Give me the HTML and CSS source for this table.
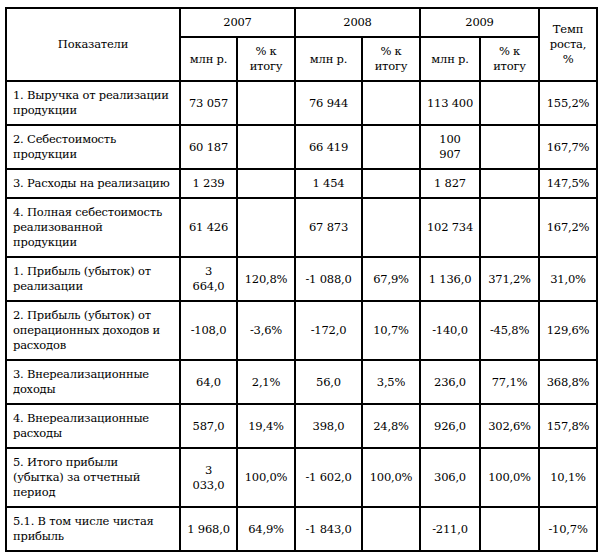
FILE: index.html
```html
<!DOCTYPE html>
<html lang="ru">
<head>
<meta charset="utf-8">
<title>Показатели</title>
<link rel="stylesheet" href="styles.css">
</head>
<body>
<div class="page">
<table class="report">
  <colgroup>
    <col class="c-name">
    <col class="c-val">
    <col class="c-pct">
    <col class="c-val8">
    <col class="c-pct">
    <col class="c-val9">
    <col class="c-pct9">
    <col class="c-rate">
  </colgroup>
  <thead>
    <tr class="h1">
      <th rowspan="2">Показатели</th>
      <th colspan="2">2007</th>
      <th colspan="2">2008</th>
      <th colspan="2">2009</th>
      <th rowspan="2">Темп<br>роста,<br>%</th>
    </tr>
    <tr class="h2">
      <th>млн р.</th>
      <th>% к<br>итогу</th>
      <th>млн р.</th>
      <th>% к<br>итогу</th>
      <th>млн р.</th>
      <th>% к<br>итогу</th>
    </tr>
  </thead>
  <tbody>
    <tr>
      <td class="name">1. Выручка от реализации<br>продукции</td>
      <td>73 057</td><td></td>
      <td>76 944</td><td></td>
      <td>113 400</td><td></td>
      <td>155,2%</td>
    </tr>
    <tr>
      <td class="name">2. Себестоимость<br>продукции</td>
      <td>60 187</td><td></td>
      <td>66 419</td><td></td>
      <td>100<br>907</td><td></td>
      <td>167,7%</td>
    </tr>
    <tr>
      <td class="name">3. Расходы на реализацию</td>
      <td>1 239</td><td></td>
      <td>1 454</td><td></td>
      <td>1 827</td><td></td>
      <td>147,5%</td>
    </tr>
    <tr>
      <td class="name">4. Полная себестоимость<br>реализованной<br>продукции</td>
      <td>61 426</td><td></td>
      <td>67 873</td><td></td>
      <td>102 734</td><td></td>
      <td>167,2%</td>
    </tr>
    <tr>
      <td class="name">1. Прибыль (убыток) от<br>реализации</td>
      <td>3<br>664,0</td><td>120,8%</td>
      <td>-1 088,0</td><td>67,9%</td>
      <td>1 136,0</td><td>371,2%</td>
      <td>31,0%</td>
    </tr>
    <tr>
      <td class="name">2. Прибыль (убыток) от<br>операционных доходов и<br>расходов</td>
      <td>-108,0</td><td>-3,6%</td>
      <td>-172,0</td><td>10,7%</td>
      <td>-140,0</td><td>-45,8%</td>
      <td>129,6%</td>
    </tr>
    <tr>
      <td class="name">3. Внереализационные<br>доходы</td>
      <td>64,0</td><td>2,1%</td>
      <td>56,0</td><td>3,5%</td>
      <td>236,0</td><td>77,1%</td>
      <td>368,8%</td>
    </tr>
    <tr>
      <td class="name">4. Внереализационные<br>расходы</td>
      <td>587,0</td><td>19,4%</td>
      <td>398,0</td><td>24,8%</td>
      <td>926,0</td><td>302,6%</td>
      <td>157,8%</td>
    </tr>
    <tr>
      <td class="name">5. Итого прибыли<br>(убытка) за отчетный<br>период</td>
      <td>3<br>033,0</td><td>100,0%</td>
      <td>-1 602,0</td><td>100,0%</td>
      <td>306,0</td><td>100,0%</td>
      <td>10,1%</td>
    </tr>
    <tr>
      <td class="name">5.1. В том числе чистая<br>прибыль</td>
      <td>1 968,0</td><td>64,9%</td>
      <td>-1 843,0</td><td></td>
      <td>-211,0</td><td></td>
      <td>-10,7%</td>
    </tr>
  </tbody>
</table>
</div>
</body>
</html>
```

FILE: styles.css
```css
html, body {
  margin: 0;
  padding: 0;
  background: #ffffff;
}

.page {
  padding: 7px 0 0 5px;
}

.report {
  border-collapse: collapse;
  table-layout: fixed;
  width: 591px;
  font-family: "DejaVu Serif", "Liberation Serif", serif;
  font-size: 11.5px;
  letter-spacing: -0.2px;
  line-height: 15px;
  color: #000000;
}

.c-name { width: 174px; }
.c-val { width: 57px; }
.c-pct { width: 58px; }
.c-val8 { width: 67px; }
.c-val9 { width: 60px; }
.c-pct9 { width: 59px; }
.c-rate { width: 58px; }

.report th,
.report td {
  border: 2px solid #000000;
  padding: 6px 2px;
  text-align: center;
  vertical-align: middle;
  white-space: nowrap;
  font-weight: normal;
}

.report td.name {
  text-align: left;
  padding-left: 6px;
  padding-right: 2px;
}
```
